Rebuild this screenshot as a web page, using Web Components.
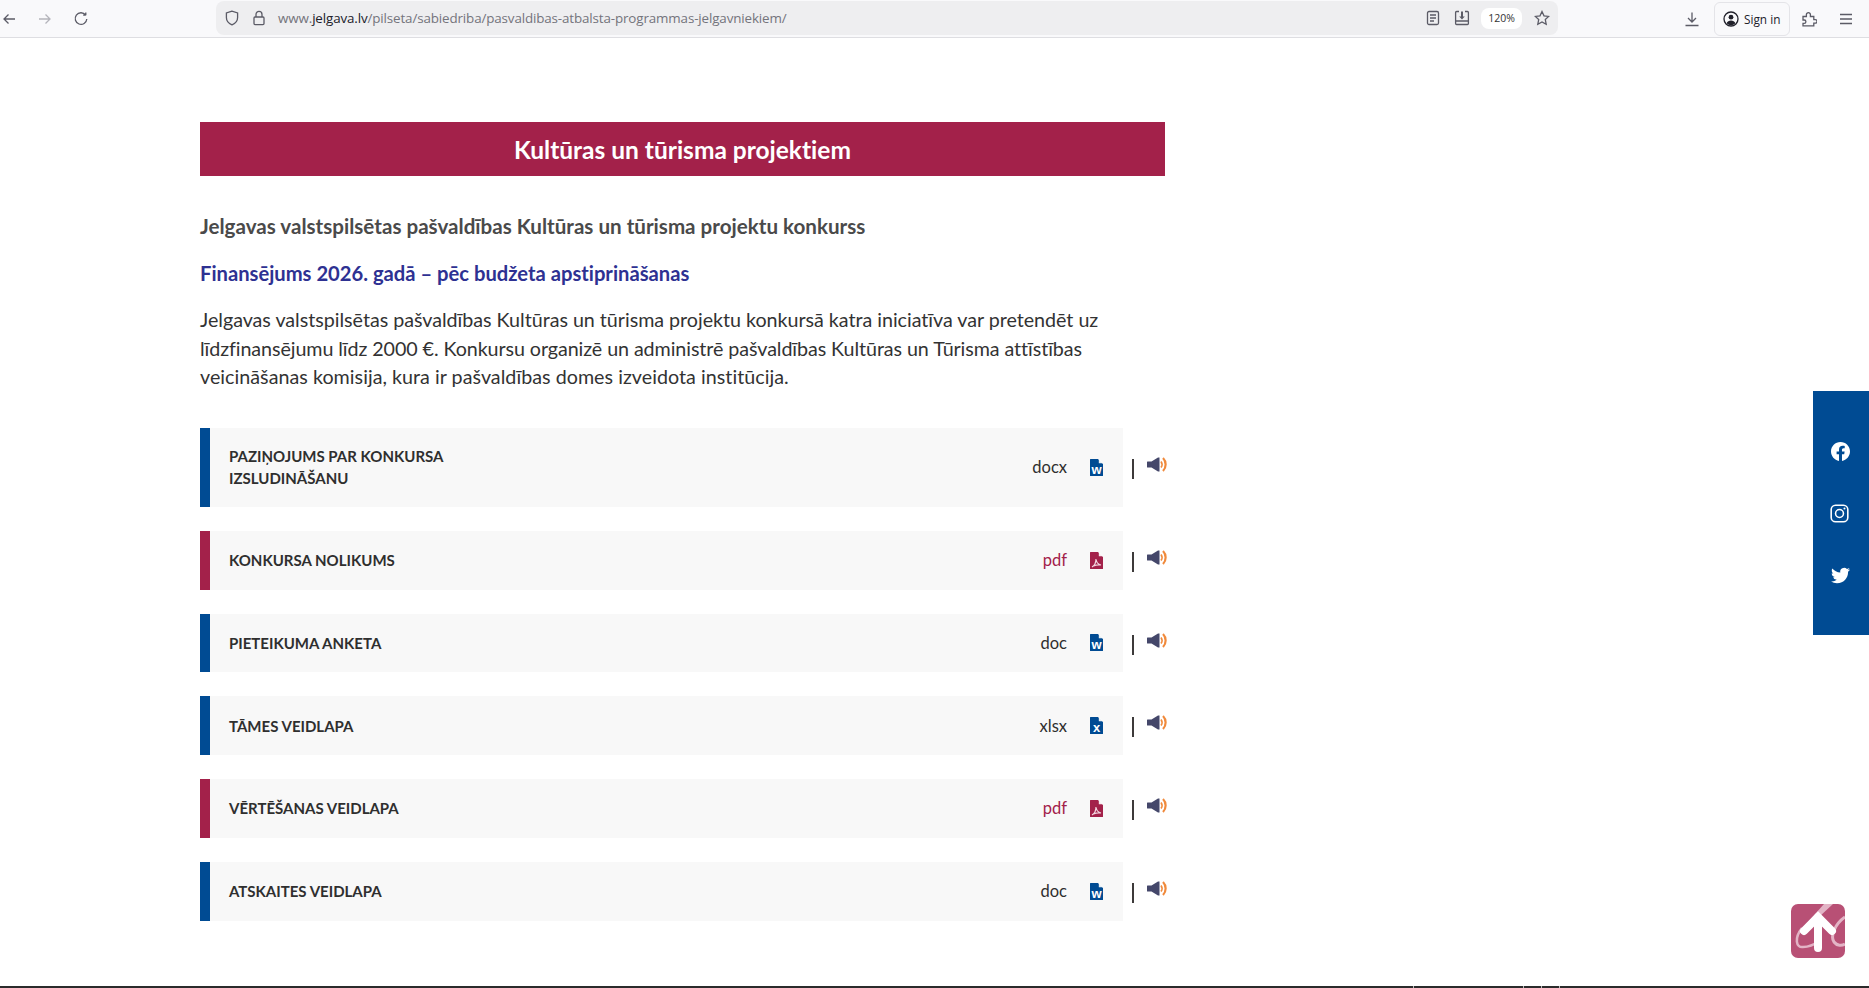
<!DOCTYPE html>
<html lang="lv">
<head>
<meta charset="utf-8">
<title>Kultūras un tūrisma projektiem</title>
<style>
  html, body { margin: 0; height: 100%; background: #fff; overflow: hidden; }
  body { display: flex; flex-direction: column; height: 988px; font-family: Lato, "Liberation Sans", sans-serif; font-variant-ligatures: none; }
  project-page { flex: 1; }
</style>
</head>
<body>
<browser-bar url-host="jelgava.lv" url-path="/pilseta/sabiedriba/pasvaldibas-atbalsta-programmas-jelgavniekiem/" zoom="120%"></browser-bar>
<project-page>
  <section-banner>Kultūras un tūrisma projektiem</section-banner>
  <file-row slot="files" label="Paziņojums par konkursa izsludināšanu" type="docx" kind="word" tall></file-row>
  <file-row slot="files" label="Konkursa nolikums" type="pdf" kind="pdf"></file-row>
  <file-row slot="files" label="Pieteikuma anketa" type="doc" kind="word"></file-row>
  <file-row slot="files" label="Tāmes veidlapa" type="xlsx" kind="excel"></file-row>
  <file-row slot="files" label="Vērtēšanas veidlapa" type="pdf" kind="pdf"></file-row>
  <file-row slot="files" label="Atskaites veidlapa" type="doc" kind="word"></file-row>
</project-page>
<social-rail></social-rail>
<scroll-top></scroll-top>
<footer-strip></footer-strip>

<script>
const ICON = {
  back: '<path d="M14 8H3M7.5 3.5 3 8l4.5 4.5"/>',
  reload: '<path d="M12.8 4.2V1.6M12.8 4.2h-2.6M12.6 4A5.8 5.8 0 1 0 13.8 8"/>',
  shield: '<path d="M8 1.2 2.4 3v4.4c0 3.4 2.4 6 5.6 7.4 3.2-1.4 5.6-4 5.6-7.4V3z"/>',
  lock: '<rect x="3" y="7" width="10" height="7.6" rx="1"/><path d="M5 7V4.4a3 3 0 0 1 6 0V7"/>',
  reader: '<rect x="2.5" y="1.5" width="11" height="13" rx="1.5"/><path d="M5 5h6M5 8h6M5 11h4"/>',
  save: '<path d="M5 1.5H2.6a1 1 0 0 0-1 1v11a1 1 0 0 0 1 1h10.8a1 1 0 0 0 1-1v-11a1 1 0 0 0-1-1H11M1.6 11h12.8"/><path d="M8 1.5v6" stroke-width="2"/><path d="M5.2 6.4h5.6L8 9.4z" fill="currentColor" stroke="none"/>',
  star: '<path d="M8 1.5l2 4.3 4.7.6-3.4 3.2.9 4.7L8 12l-4.2 2.3.9-4.7L1.3 6.4 6 5.8z"/>',
  download: '<path d="M8 1.5v9M4 7l4 4 4-4M1.5 14.5h13"/>',
  account: '<circle cx="8" cy="8" r="7"/><circle cx="8" cy="6.2" r="2.4" fill="currentColor" stroke="none"/><path d="M3.6 12.2c.8-1.8 2.4-2.6 4.4-2.6s3.6.8 4.4 2.6a5.8 5.8 0 0 1-8.8 0z" fill="currentColor" stroke="none"/>',
  puzzle: '<path d="M2 5.5h3.4V3.6a2 2 0 1 1 4 0v1.9h3.4v3.1h1.4a1.8 1.8 0 0 1 0 3.6h-1.4v2.6H2v-2.4h1.2a1.7 1.7 0 0 0 0-3.4H2z"/>',
  menu: '<path d="M2 3.5h12M2 8h12M2 12.5h12"/>'
};

const barTemplate = document.createElement("template");
barTemplate.innerHTML = `
  <style>
    :host {
      display: flex;
      align-items: center;
      height: 38px;
      box-sizing: border-box;
      border-bottom: 1px solid #dedee2;
      background: #f9f9fb;
      color: #5b5b66;
      font-family: "Open Sans", "Liberation Sans", sans-serif;
      font-size: 12px;
    }
    svg { width: 16px; height: 16px; fill: none; stroke: currentColor; stroke-width: 1.3; flex: none; }
    .nav { display: flex; gap: 20px; padding-left: 1px; width: 216px; box-sizing: border-box; }
    .nav svg.off { color: #b4b4ba; }
    .url {
      display: flex;
      align-items: center;
      width: 1342px;
      height: 34px;
      box-sizing: border-box;
      padding: 0 8px;
      background: #eeeef0;
      border-radius: 8px;
      margin-top: -1px;
    }
    .url .lock { margin-left: 11px; }
    .addr { margin-left: 11px; flex: 1; color: #74747c; font-size: 13.4px; white-space: nowrap; letter-spacing: -.01em; }
    .addr b { font-weight: 400; color: #20202a; }
    .pill { background: #fff; border-radius: 8px; height: 21px; width: 41px; display: flex; align-items: center; justify-content: center; font-size: 10.5px; color: #333; margin: 0 12px 0 11px; }
    .url .reader { margin-right: 13px; }
    .right { display: flex; align-items: center; margin-left: 126px; }
    .sign { display: flex; align-items: center; gap: 5px; box-sizing: border-box; width: 76px; height: 34px; margin: 0 11px 0 14px; padding-left: 8px; border: 1px solid #e4e4e8; border-radius: 6px; color: #20202a; font-size: 11.8px; white-space: nowrap; }
    .menu { margin-left: 21px; }
  </style>
  <div class="nav">
    <svg viewBox="0 0 16 16">${ICON.back}</svg>
    <svg class="off" viewBox="0 0 16 16" style="transform:scaleX(-1)">${ICON.back}</svg>
    <svg viewBox="0 0 16 16">${ICON.reload}</svg>
  </div>
  <div class="url">
    <svg viewBox="0 0 16 16">${ICON.shield}</svg>
    <svg class="lock" viewBox="0 0 16 16">${ICON.lock}</svg>
    <span class="addr">www.<b></b><span class="path"></span></span>
    <svg class="reader" viewBox="0 0 16 16">${ICON.reader}</svg>
    <svg viewBox="0 0 16 16">${ICON.save}</svg>
    <span class="pill"></span>
    <svg viewBox="0 0 16 16">${ICON.star}</svg>
  </div>
  <div class="right">
    <svg viewBox="0 0 16 16">${ICON.download}</svg>
    <div class="sign"><svg viewBox="0 0 16 16">${ICON.account}</svg>Sign in</div>
    <svg viewBox="0 0 16 16">${ICON.puzzle}</svg>
    <svg class="menu" viewBox="0 0 16 16">${ICON.menu}</svg>
  </div>
`;

customElements.define("browser-bar", class extends HTMLElement {
  constructor() {
    super();
    this.attachShadow({ mode: "open" });
    this.shadowRoot.appendChild(barTemplate.content.cloneNode(true));
  }
  connectedCallback() {
    this.shadowRoot.querySelector("b").textContent = this.getAttribute("url-host");
    this.shadowRoot.querySelector(".path").textContent = this.getAttribute("url-path");
    this.shadowRoot.querySelector(".pill").textContent = this.getAttribute("zoom");
  }
});

const bannerTemplate = document.createElement("template");
bannerTemplate.innerHTML = `
  <style>
    :host {
      display: block;
      height: 54px;
      line-height: 56px;
      background: #a3214a;
      color: #fff;
      text-align: center;
      font-size: 24.5px;
      font-weight: 700;
    }
  </style>
  <slot></slot>
`;
customElements.define("section-banner", class extends HTMLElement {
  constructor() {
    super();
    this.attachShadow({ mode: "open" }).appendChild(bannerTemplate.content.cloneNode(true));
  }
});

const pageTemplate = document.createElement("template");
pageTemplate.innerHTML = `
  <style>
    :host { display: block; padding: 84px 0 0 200px; width: 965px; color: #333; }
    .lead { margin: 37px 0 0; font-size: 20.6px; font-weight: 700; line-height: 26px; color: #4a4a4a; }
    .fund { margin: 21px 0 0; font-size: 20.2px; font-weight: 700; line-height: 26px; color: #2e3192; }
    p { margin: 20px 0 0; font-size: 19.7px; line-height: 28.6px; color: #333; }
    p span { display: block; white-space: nowrap; }
    .first { letter-spacing: -.025px; }
    .tight { letter-spacing: -.076px; }
    .last { letter-spacing: .03px; }
    .files { display: flex; flex-direction: column; gap: 24px; margin-top: 36px; }
  </style>
  <slot></slot>
  <div class="lead">Jelgavas valstspilsētas pašvaldības Kultūras un tūrisma projektu konkurss</div>
  <div class="fund">Finansējums 2026. gadā – pēc budžeta apstiprināšanas</div>
  <p>
    <span class="first">Jelgavas valstspilsētas pašvaldības Kultūras un tūrisma projektu konkursā katra iniciatīva var pretendēt uz</span>
    <span class="tight">līdzfinansējumu līdz 2000 €. Konkursu organizē un administrē pašvaldības Kultūras un Tūrisma attīstības</span>
    <span class="last">veicināšanas komisija, kura ir pašvaldības domes izveidota institūcija.</span>
  </p>
  <div class="files"><slot name="files"></slot></div>
`;
customElements.define("project-page", class extends HTMLElement {
  constructor() {
    super();
    this.attachShadow({ mode: "open" }).appendChild(pageTemplate.content.cloneNode(true));
  }
});

const FILE_ICON = {
  word: { fill: "#004b93", mark: "w" },
  excel: { fill: "#004b93", mark: "x" },
  pdf: { fill: "#a3214a", mark: "" }
};

const rowTemplate = document.createElement("template");
rowTemplate.innerHTML = `
  <style>
    :host { display: flex; align-items: flex-start; width: 968px; }
    .box {
      display: flex;
      align-items: center;
      box-sizing: border-box;
      width: 923px;
      height: 58.75px;
      padding-left: 19px;
      border-left: 10px solid #004b93;
      background: #f8f8f8;
    }
    :host([tall]) .box { height: 79px; }
    :host([kind="pdf"]) .box { border-left-color: #a3214a; }
    .label { width: 300px; font-size: 15px; font-weight: 700; line-height: 22px; text-transform: uppercase; color: #2f2f2f; }
    .type { margin-left: auto; font-size: 16.5px; color: #2f2f2f; }
    :host([kind="pdf"]) .type { color: #a3214a; }
    .file { margin: 0 20px 0 23px; width: 13px; height: 17px; flex: none; }
    .file text { font: 700 13px "Liberation Sans", sans-serif; fill: #fff; text-anchor: middle; }
    .sep { width: 2px; height: 20px; margin: 21px 0 0 9px; background: #3d3a3a; flex: none; }
    .speaker { width: 20px; height: 15px; margin: 19px 0 0 13px; flex: none; }
    :host([tall]) .sep { margin-top: 31px; }
    :host([tall]) .speaker { margin-top: 29px; }
  </style>
  <div class="box">
    <span class="label"></span>
    <span class="type"></span>
    <svg class="file" viewBox="0 0 13 17">
      <path class="sheet" d="M0 .5a.5.5 0 0 1 .5-.5H8l5 5v11.5a.5.5 0 0 1-.5.5H.5a.5.5 0 0 1-.5-.5z"/>
      <path d="M8.8 0 13 4.2H8.8z" fill="#fff" opacity=".9"/>
      <text x="6.5" y="15"></text>
      <path class="acro" fill="none" stroke="#f3d5df" stroke-width="1.2" d="M2 15c2.5-1.5 4-4.5 4-8 .3 3 2 5.3 5 6-2.6-.3-5.8.2-7.5 1"/>
    </svg>
  </div>
  <span class="sep"></span>
  <svg class="speaker" viewBox="0 0 20 15">
    <path d="M.5 4.5H4.5L11 .5h1.5v14H11L4.500 10.500H.5a.5.5 0 0 1-.5-.5V5a.5.5 0 0 1 .5-.5z" fill="#44476a"/>
    <path d="M14 4.5c1.3 1.8 1.3 4.2 0 6" fill="none" stroke="#f08a3c" stroke-width="1.6"/>
    <path d="M16 1c3.5 3.5 3.5 9.5 0 13" fill="none" stroke="#f08a3c" stroke-width="2.2"/>
  </svg>
`;
customElements.define("file-row", class extends HTMLElement {
  constructor() {
    super();
    this.attachShadow({ mode: "open" }).appendChild(rowTemplate.content.cloneNode(true));
  }
  connectedCallback() {
    const root = this.shadowRoot;
    const icon = FILE_ICON[this.getAttribute("kind")];
    root.querySelector(".label").textContent = this.getAttribute("label");
    root.querySelector(".type").textContent = this.getAttribute("type");
    root.querySelector(".sheet").setAttribute("fill", icon.fill);
    root.querySelector("text").textContent = icon.mark;
    if (icon.mark) root.querySelector(".acro").remove();
  }
});

const railTemplate = document.createElement("template");
railTemplate.innerHTML = `
  <style>
    :host {
      position: fixed;
      top: 391px;
      right: 0;
      width: 56px;
      height: 244px;
      display: flex;
      flex-direction: column;
      align-items: center;
      justify-content: center;
      gap: 43px;
      background: #004b93;
    }
    svg { width: 19px; height: 19px; fill: #fff; margin-left: -1px; }
    .ig { fill: none; stroke: #fff; stroke-width: 2; }
  </style>
  <svg viewBox="0 0 24 24"><path d="M24 12.073c0-6.627-5.373-12-12-12s-12 5.373-12 12c0 5.99 4.388 10.954 10.125 11.854v-8.385H7.078v-3.47h3.047V9.43c0-3.007 1.792-4.669 4.533-4.669 1.312 0 2.686.235 2.686.235v2.953H15.83c-1.491 0-1.956.925-1.956 1.874v2.25h3.328l-.532 3.47h-2.796v8.385C19.612 23.027 24 18.062 24 12.073z"/></svg>
  <svg class="ig" viewBox="0 0 24 24" style="margin-left:-3px"><rect x="1.5" y="1.5" width="21" height="21" rx="5.5"/><circle cx="12" cy="12" r="5"/><circle cx="18.3" cy="5.7" r="1.3" fill="#fff" stroke="none"/></svg>
  <svg viewBox="0 0 24 24"><path d="M23.953 4.57a10 10 0 01-2.825.775 4.958 4.958 0 002.163-2.723c-.951.555-2.005.959-3.127 1.184a4.92 4.92 0 00-8.384 4.482C7.69 8.095 4.067 6.13 1.64 3.162a4.822 4.822 0 00-.666 2.475c0 1.71.87 3.213 2.188 4.096a4.904 4.904 0 01-2.228-.616v.06a4.923 4.923 0 003.946 4.827 4.996 4.996 0 01-2.212.085 4.936 4.936 0 004.604 3.417 9.867 9.867 0 01-6.102 2.105c-.39 0-.779-.023-1.17-.067a13.995 13.995 0 007.557 2.209c9.053 0 13.998-7.496 13.998-13.985 0-.21 0-.42-.015-.63A9.935 9.935 0 0024 4.59z"/></svg>
`;
customElements.define("social-rail", class extends HTMLElement {
  constructor() {
    super();
    this.attachShadow({ mode: "open" }).appendChild(railTemplate.content.cloneNode(true));
  }
});

const topTemplate = document.createElement("template");
topTemplate.innerHTML = `
  <style>
    :host { position: fixed; left: 1791px; top: 904px; width: 54px; height: 54px; display: block; }
    svg { display: block; width: 54px; height: 54px; }
  </style>
  <svg viewBox="0 0 54 54">
    <rect width="54" height="54" rx="7" fill="#b85075"/>
    <path d="M33 0h9L14 26 8 28z" fill="#e3b4c6"/>
    <path d="M11 24C3 34 5 44 12 43c5 0 12-3 16-6" fill="none" stroke="#e3b4c6" stroke-width="2.5"/>
    <path d="M54 13C44 20 39 32 43 38c3 4 8 4 11 2" fill="none" stroke="#e3b4c6" stroke-width="3"/>
    <path d="M27 44V13M13 27 27 13l14 14" fill="none" stroke="#fff" stroke-width="8" stroke-linecap="round"/>
  </svg>
`;
customElements.define("scroll-top", class extends HTMLElement {
  constructor() {
    super();
    this.attachShadow({ mode: "open" }).appendChild(topTemplate.content.cloneNode(true));
  }
});

customElements.define("footer-strip", class extends HTMLElement {
  constructor() {
    super();
    this.attachShadow({ mode: "open" }).innerHTML = `
      <style>
        :host { display: flex; height: 2px; background: #2b2b2b; padding-left: 1413px; gap: 17px; }
        i { width: 1px; background: #bbb; }
        i:nth-child(2) { margin-right: 92px; }
      </style>
      <i></i><i></i><i></i><i></i>`;
  }
});
</script>
</body>
</html>
